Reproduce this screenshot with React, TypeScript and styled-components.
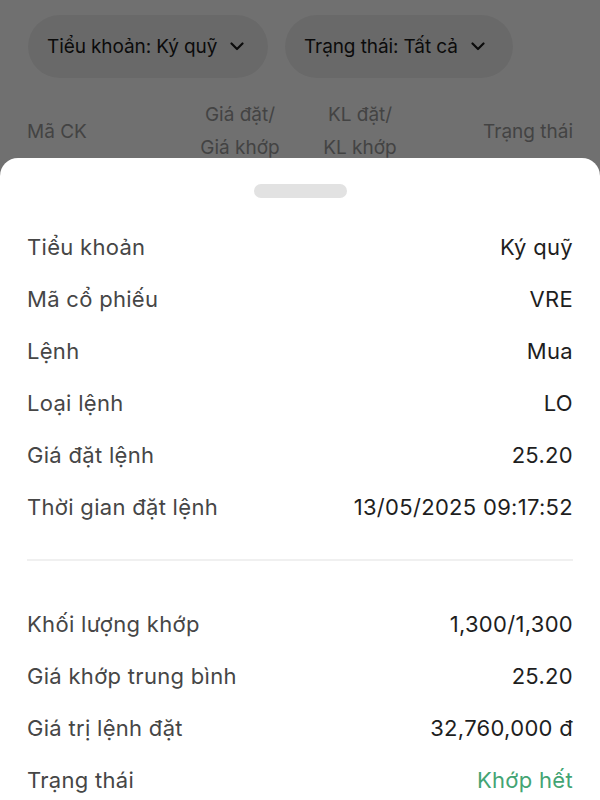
import React from "react";
import styled, { createGlobalStyle } from "styled-components";

const GlobalStyle = createGlobalStyle`
  * { box-sizing: border-box; }
  html, body { margin: 0; padding: 0; }
  body {
    width: 600px;
    height: 800px;
    overflow: hidden;
    background: #ffffff;
    font-family: Inter, "Noto Sans", "Liberation Sans", sans-serif;
    -webkit-font-smoothing: antialiased;
  }
`;

const Page = styled.div`
  position: relative;
  width: 600px;
  height: 800px;
  overflow: hidden;
  background: #ffffff;
`;

const FilterBar = styled.div`
  display: flex;
  gap: 17px;
  padding: 15px 28px 0;
`;

const Chip = styled.div<{ $w: number }>`
  width: ${(p) => p.$w}px;
  height: 63px;
  border-radius: 32px;
  background: #f0f0f0;
  display: flex;
  align-items: center;
  padding-left: 19px;
  gap: 13px;
  font-size: 19px;
  letter-spacing: -0.1px;
  color: #1a1a1a;
`;

const TableHead = styled.div`
  display: grid;
  grid-template-columns: 1fr 120px 120px 1fr;
  align-items: center;
  padding: 0 27px;
  margin-top: 20px;
  font-size: 19px;
  line-height: 33px;
  color: #9a9a9a;
`;

const HeadCell = styled.div<{ $align: "left" | "center" | "right" }>`
  text-align: ${(p) => p.$align};
`;

const Overlay = styled.div`
  position: absolute;
  inset: 0;
  background: rgba(0, 0, 0, 0.56);
  display: flex;
  flex-direction: column;
  padding-top: 158px;
`;

const Sheet = styled.div`
  flex: 1;
  background: #ffffff;
  border-radius: 18px 18px 0 0;
  overflow: hidden;
  padding: 26px 27px 0;
`;

const Handle = styled.div`
  width: 93px;
  height: 14px;
  border-radius: 7px;
  background: #e2e2e2;
  margin: 0 auto 23px;
`;

const Section = styled.div`
  display: flex;
  flex-direction: column;
`;

const Row = styled.div`
  display: flex;
  justify-content: space-between;
  align-items: center;
  height: 52px;
  font-size: 22px;
  letter-spacing: 0.3px;
`;

const Label = styled.span`
  color: #464646;
`;

const Value = styled.span<{ $color?: string }>`
  color: ${(p) => p.$color ?? "#1e1e1e"};
`;

const Divider = styled.div`
  height: 2px;
  background: #f0f0f0;
  margin: 26px 0 37px;
`;

const Chevron = () => (
  <svg width="14" height="9" viewBox="0 0 14 9" fill="none">
    <path d="M1.5 1.5L7 7L12.5 1.5" stroke="#1a1a1a" strokeWidth="2.2" strokeLinecap="round" strokeLinejoin="round" />
  </svg>
);

const first: [string, string][] = [
  ["Tiểu khoản", "Ký quỹ"],
  ["Mã cổ phiếu", "VRE"],
  ["Lệnh", "Mua"],
  ["Loại lệnh", "LO"],
  ["Giá đặt lệnh", "25.20"],
  ["Thời gian đặt lệnh", "13/05/2025 09:17:52"],
];

const second: [string, string, string?][] = [
  ["Khối lượng khớp", "1,300/1,300"],
  ["Giá khớp trung bình", "25.20"],
  ["Giá trị lệnh đặt", "32,760,000 đ"],
  ["Trạng thái", "Khớp hết", "#43a473"],
];

export default function App() {
  return (
    <Page>
      <GlobalStyle />
      <FilterBar>
        <Chip $w={240}>
          <span>Tiểu khoản: Ký quỹ</span>
          <Chevron />
        </Chip>
        <Chip $w={228}>
          <span>Trạng thái: Tất cả</span>
          <Chevron />
        </Chip>
      </FilterBar>
      <TableHead>
        <HeadCell $align="left">Mã CK</HeadCell>
        <HeadCell $align="center">
          Giá đặt/
          <br />
          Giá khớp
        </HeadCell>
        <HeadCell $align="center">
          KL đặt/
          <br />
          KL khớp
        </HeadCell>
        <HeadCell $align="right">Trạng thái</HeadCell>
      </TableHead>
      <Overlay>
        <Sheet>
          <Handle />
          <Section>
            {first.map(([l, v]) => (
              <Row key={l}>
                <Label>{l}</Label>
                <Value>{v}</Value>
              </Row>
            ))}
          </Section>
          <Divider />
          <Section>
            {second.map(([l, v, c]) => (
              <Row key={l}>
                <Label>{l}</Label>
                <Value $color={c}>{v}</Value>
              </Row>
            ))}
          </Section>
        </Sheet>
      </Overlay>
    </Page>
  );
}
